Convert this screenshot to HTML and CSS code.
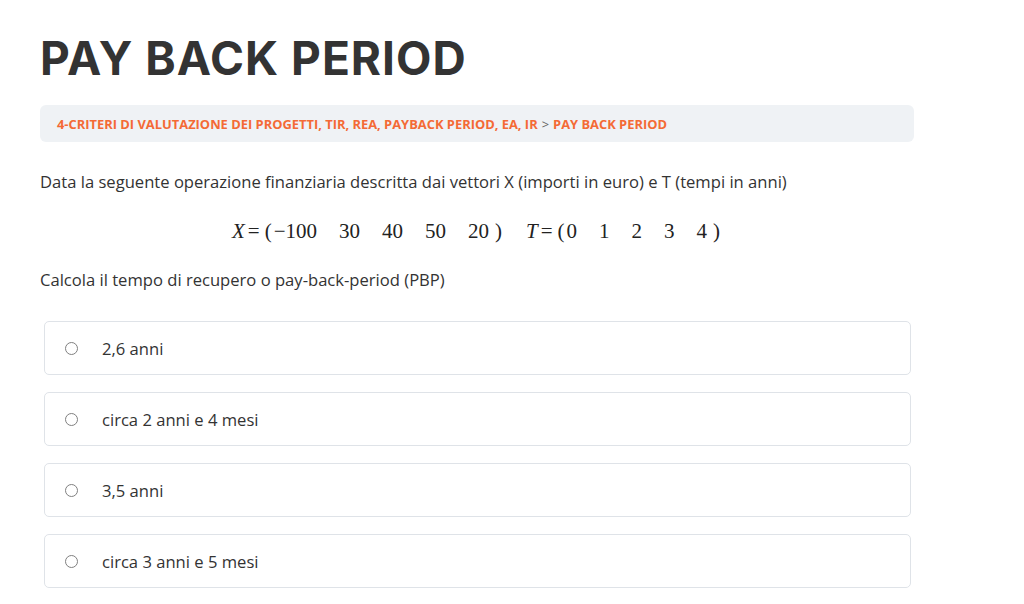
FILE: index.html
```html
<!DOCTYPE html>
<html lang="it">
<head>
<meta charset="utf-8">
<title>Pay back period</title>
<link rel="stylesheet" href="styles.css">
</head>
<body>
<main class="page">
  <h1 class="title">PAY BACK PERIOD</h1>
  <nav class="crumbs">
    <a class="crumb">4-CRITERI DI VALUTAZIONE DEI PROGETTI, TIR, REA, PAYBACK PERIOD, EA, IR</a>
    <span class="sep">&gt;</span>
    <a class="crumb">PAY BACK PERIOD</a>
  </nav>
  <p class="text">Data la seguente operazione finanziaria descritta dai vettori X (importi in euro) e T (tempi in anni)</p>
  <div class="math">
    <span class="var">X</span><span class="eq">=</span><span class="paren">(</span><span class="cell">&minus;100</span><span class="cell">30</span><span class="cell">40</span><span class="cell">50</span><span class="cell last">20</span><span class="paren">)</span>
    <span class="gapm"></span>
    <span class="var">T</span><span class="eq">=</span><span class="paren">(</span><span class="cell">0</span><span class="cell">1</span><span class="cell">2</span><span class="cell">3</span><span class="cell last">4</span><span class="paren">)</span>
  </div>
  <p class="text question">Calcola il tempo di recupero o pay-back-period (PBP)</p>
  <div class="options">
    <label class="option"><span class="radio"></span><span>2,6 anni</span></label>
    <label class="option"><span class="radio"></span><span>circa 2 anni e 4 mesi</span></label>
    <label class="option"><span class="radio"></span><span>3,5 anni</span></label>
    <label class="option"><span class="radio"></span><span>circa 3 anni e 5 mesi</span></label>
  </div>
</main>
</body>
</html>
```
FILE: styles.css
```css
html, body { margin: 0; padding: 0; background: #fff; }
body { font-family: "Open Sans", "Noto Sans", sans-serif; color: #333; }
.page { width: 874px; padding: 30px 0 0 40px; }
.title {
  margin: 0;
  font-family: "Inter", "DejaVu Sans", sans-serif;
  font-weight: 700;
  font-size: 46px;
  line-height: 56px;
  color: #333;
  letter-spacing: 1px;
}
.crumbs {
  margin-top: 19px;
  background: #eff2f5;
  border-radius: 6px;
  height: 37px;
  display: flex;
  align-items: center;
  padding: 0 17px;
  font-size: 12.9px;
  font-weight: 700;
}
.crumb { color: #f46a35; }
.sep { color: #666; font-weight: 400; margin: 0 4px; }
.text { margin: 28px 0 0; font-size: 16.6px; line-height: 24px; }
.math {
  margin-top: 25px;
  display: flex;
  justify-content: center;
  align-items: baseline;
  font-family: "Liberation Serif", "DejaVu Serif", serif;
  font-size: 21px;
  color: #222;
  height: 32px;
}
.var { font-style: italic; }
.eq { margin: 0 3px; }
.paren { margin: 0 2px; }
.cell { margin-right: 22px; }
.cell.last { margin-right: 4px; }
.gapm { width: 22px; }
.question { margin-top: 17px; }
.options { margin-top: 29px; display: flex; flex-direction: column; gap: 17px; padding-left: 4px; width: 867px; }
.option {
  display: flex;
  align-items: center;
  height: 52px;
  border: 1px solid #dfe3e8;
  border-radius: 5px;
  padding-left: 20px;
  font-size: 16.6px;
}
.radio {
  width: 11px; height: 11px;
  border: 1px solid #808080;
  border-radius: 50%;
  margin-right: 24px;
}
```
